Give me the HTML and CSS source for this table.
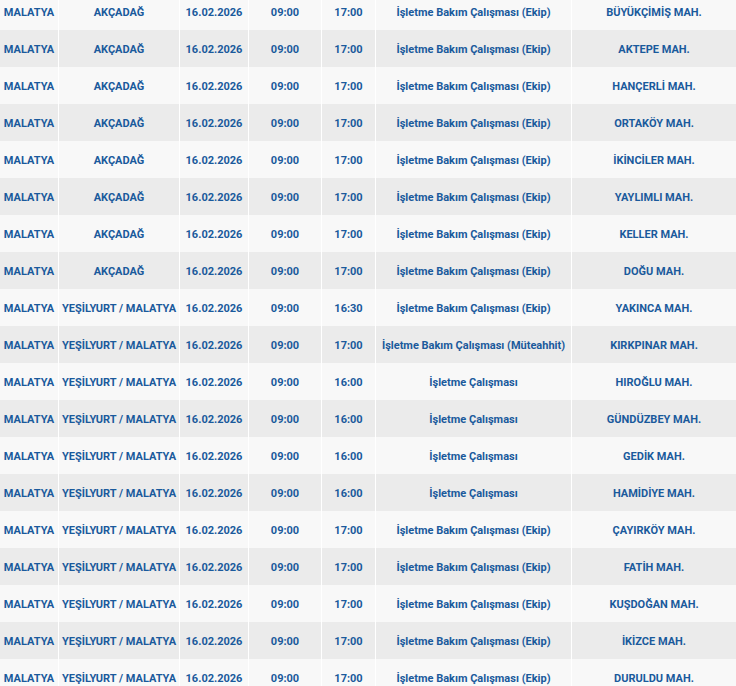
FILE: index.html
```html
<!DOCTYPE html>
<html lang="tr">
<head>
<meta charset="utf-8">
<link rel="stylesheet" href="styles.css">
</head>
<body>
<table class="outages">
<colgroup>
<col class="c1"><col class="c2"><col class="c3"><col class="c4"><col class="c5"><col class="c6"><col class="c7">
</colgroup>
<tbody>
<tr><td>MALATYA</td><td>AKÇADAĞ</td><td>16.02.2026</td><td>09:00</td><td>17:00</td><td>İşletme Bakım Çalışması (Ekip)</td><td>BÜYÜKÇİMİŞ MAH.</td></tr>
<tr><td>MALATYA</td><td>AKÇADAĞ</td><td>16.02.2026</td><td>09:00</td><td>17:00</td><td>İşletme Bakım Çalışması (Ekip)</td><td>AKTEPE MAH.</td></tr>
<tr><td>MALATYA</td><td>AKÇADAĞ</td><td>16.02.2026</td><td>09:00</td><td>17:00</td><td>İşletme Bakım Çalışması (Ekip)</td><td>HANÇERLİ MAH.</td></tr>
<tr><td>MALATYA</td><td>AKÇADAĞ</td><td>16.02.2026</td><td>09:00</td><td>17:00</td><td>İşletme Bakım Çalışması (Ekip)</td><td>ORTAKÖY MAH.</td></tr>
<tr><td>MALATYA</td><td>AKÇADAĞ</td><td>16.02.2026</td><td>09:00</td><td>17:00</td><td>İşletme Bakım Çalışması (Ekip)</td><td>İKİNCİLER MAH.</td></tr>
<tr><td>MALATYA</td><td>AKÇADAĞ</td><td>16.02.2026</td><td>09:00</td><td>17:00</td><td>İşletme Bakım Çalışması (Ekip)</td><td>YAYLIMLI MAH.</td></tr>
<tr><td>MALATYA</td><td>AKÇADAĞ</td><td>16.02.2026</td><td>09:00</td><td>17:00</td><td>İşletme Bakım Çalışması (Ekip)</td><td>KELLER MAH.</td></tr>
<tr><td>MALATYA</td><td>AKÇADAĞ</td><td>16.02.2026</td><td>09:00</td><td>17:00</td><td>İşletme Bakım Çalışması (Ekip)</td><td>DOĞU MAH.</td></tr>
<tr><td>MALATYA</td><td>YEŞİLYURT / MALATYA</td><td>16.02.2026</td><td>09:00</td><td>16:30</td><td>İşletme Bakım Çalışması (Ekip)</td><td>YAKINCA MAH.</td></tr>
<tr><td>MALATYA</td><td>YEŞİLYURT / MALATYA</td><td>16.02.2026</td><td>09:00</td><td>17:00</td><td>İşletme Bakım Çalışması (Müteahhit)</td><td>KIRKPINAR MAH.</td></tr>
<tr><td>MALATYA</td><td>YEŞİLYURT / MALATYA</td><td>16.02.2026</td><td>09:00</td><td>16:00</td><td>İşletme Çalışması</td><td>HIROĞLU MAH.</td></tr>
<tr><td>MALATYA</td><td>YEŞİLYURT / MALATYA</td><td>16.02.2026</td><td>09:00</td><td>16:00</td><td>İşletme Çalışması</td><td>GÜNDÜZBEY MAH.</td></tr>
<tr><td>MALATYA</td><td>YEŞİLYURT / MALATYA</td><td>16.02.2026</td><td>09:00</td><td>16:00</td><td>İşletme Çalışması</td><td>GEDİK MAH.</td></tr>
<tr><td>MALATYA</td><td>YEŞİLYURT / MALATYA</td><td>16.02.2026</td><td>09:00</td><td>16:00</td><td>İşletme Çalışması</td><td>HAMİDİYE MAH.</td></tr>
<tr><td>MALATYA</td><td>YEŞİLYURT / MALATYA</td><td>16.02.2026</td><td>09:00</td><td>17:00</td><td>İşletme Bakım Çalışması (Ekip)</td><td>ÇAYIRKÖY MAH.</td></tr>
<tr><td>MALATYA</td><td>YEŞİLYURT / MALATYA</td><td>16.02.2026</td><td>09:00</td><td>17:00</td><td>İşletme Bakım Çalışması (Ekip)</td><td>FATİH MAH.</td></tr>
<tr><td>MALATYA</td><td>YEŞİLYURT / MALATYA</td><td>16.02.2026</td><td>09:00</td><td>17:00</td><td>İşletme Bakım Çalışması (Ekip)</td><td>KUŞDOĞAN MAH.</td></tr>
<tr><td>MALATYA</td><td>YEŞİLYURT / MALATYA</td><td>16.02.2026</td><td>09:00</td><td>17:00</td><td>İşletme Bakım Çalışması (Ekip)</td><td>İKİZCE MAH.</td></tr>
<tr><td>MALATYA</td><td>YEŞİLYURT / MALATYA</td><td>16.02.2026</td><td>09:00</td><td>17:00</td><td>İşletme Bakım Çalışması (Ekip)</td><td>DURULDU MAH.</td></tr>
</tbody>
</table>
</body>
</html>
```
FILE: styles.css
```css
html, body {
  margin: 0;
  padding: 0;
  background: #f8f8f8;
  overflow: hidden;
}
.outages {
  width: 736px;
  margin-top: -7px;
  table-layout: fixed;
  border-collapse: separate;
  border-spacing: 0;
  font-family: Roboto, "Liberation Sans", sans-serif;
  font-size: 11px;
  font-weight: 700;
  color: #1a5a9c;
}
.c1 { width: 58px; }
.c2 { width: 121px; }
.c3 { width: 69px; }
.c4 { width: 73px; }
.c5 { width: 54px; }
.c6 { width: 196px; }
.c7 { width: 165px; }
.outages td {
  height: 37px;
  padding: 2px 0 0;
  box-sizing: border-box;
  text-align: center;
  vertical-align: middle;
  white-space: nowrap;
  border-left: 1px solid #ffffff;
  background: #f8f8f8;
}
.outages td:first-child {
  border-left: none;
}
.outages tr:nth-child(even) td {
  background: #ebebeb;
}
```
